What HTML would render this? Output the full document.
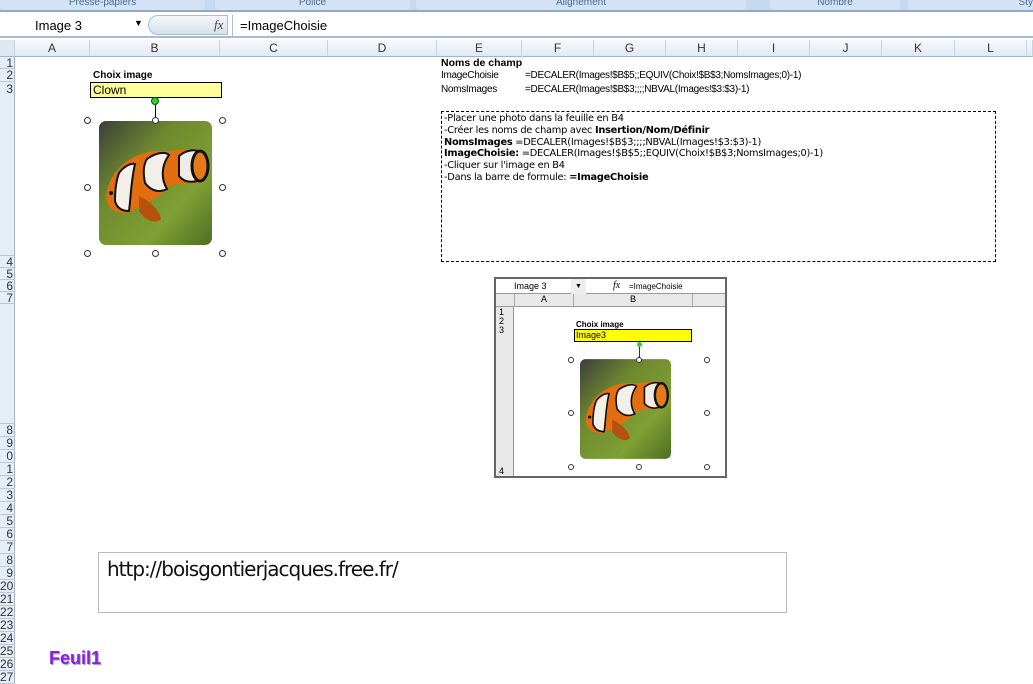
<!DOCTYPE html>
<html><head><meta charset="utf-8"><style>
*{margin:0;padding:0;box-sizing:border-box}
body{width:1033px;height:679px;overflow:hidden;background:#fff;font-family:"Liberation Sans",sans-serif;position:relative}
.a{position:absolute}
.rib{left:0;top:0;width:1033px;height:12px;background:#c5d9ef;border-bottom:2px solid #8fa9c8}
.tab{position:absolute;top:0;height:10px;background:#d4e3f4;border-radius:0 0 4px 4px;font-size:10px;color:#4a6a99;text-align:center;line-height:6px;overflow:hidden}
.colh{top:40px;height:17px;background:linear-gradient(#f7f9fc,#e2e9f3);border-bottom:1px solid #9eb6ce;font-size:12px;color:#333;text-align:center;line-height:16px;border-right:1px solid #c5d2e0}
.rowh{left:0;width:15px;background:#e6edf6;border-bottom:1px solid #b7c8dc;border-right:1px solid #9eb6ce;font-size:12px;color:#333;text-align:right;padding-right:1px;line-height:12px;overflow:hidden}
.h{width:7px;height:7px;border:1px solid #333;border-radius:50%;background:#fff}
.h2{width:6px;height:6px;border:1px solid #333;border-radius:50%;background:#fff}
.t{font-size:10px;color:#000;white-space:nowrap}
</style></head><body>
<div class="a rib"></div>
<div class="tab" style="left:0;width:205px">Presse-papiers</div>
<div class="tab" style="left:215px;width:195px">Police</div>
<div class="tab" style="left:416px;width:330px">Alignement</div>
<div class="tab" style="left:770px;width:130px">Nombre</div>
<div class="tab" style="left:908px;width:125px;text-align:right">Sty</div>
<div class="a" style="left:0;top:14px;width:1033px;height:24px;background:#fff;border-bottom:2px solid #a7bcd4"></div>
<div class="a" style="left:35px;top:18px;font-size:13px">Image 3</div>
<div class="a" style="left:134px;top:18px;font-size:9px">▼</div>
<div class="a" style="left:148px;top:15px;width:80px;height:20px;border-radius:10px 0 0 10px;background:linear-gradient(#f4f7fb,#d6e0ec);border:1px solid #aabbd0"></div>
<div class="a" style="left:214px;top:17px;font-family:'Liberation Serif',serif;font-style:italic;font-size:13px;color:#444">fx</div>
<div class="a" style="left:232px;top:15px;width:1px;height:21px;background:#aabbd0"></div>
<div class="a" style="left:240px;top:18px;font-size:13px">=ImageChoisie</div>
<div class="a colh" style="left:0;width:15px;background:#dfe7f1"></div>
<div class="a colh" style="left:15px;width:75px">A</div>
<div class="a colh" style="left:90px;width:130px">B</div>
<div class="a colh" style="left:220px;width:108px">C</div>
<div class="a colh" style="left:328px;width:109px">D</div>
<div class="a colh" style="left:437px;width:85px">E</div>
<div class="a colh" style="left:522px;width:72px">F</div>
<div class="a colh" style="left:594px;width:72px">G</div>
<div class="a colh" style="left:666px;width:72px">H</div>
<div class="a colh" style="left:738px;width:72px">I</div>
<div class="a colh" style="left:810px;width:72px">J</div>
<div class="a colh" style="left:882px;width:73px">K</div>
<div class="a colh" style="left:955px;width:72px">L</div>
<div class="a colh" style="left:1027px;width:6px"></div>
<div class="a rowh" style="top:57px;height:12px">1</div>
<div class="a rowh" style="top:69px;height:13px">2</div>
<div class="a rowh" style="top:82px;height:174px;line-height:14px">3</div>
<div class="a rowh" style="top:256px;height:12px">4</div>
<div class="a rowh" style="top:268px;height:12px">5</div>
<div class="a rowh" style="top:280px;height:12px">6</div>
<div class="a rowh" style="top:292px;height:12px">7</div>
<div class="a rowh" style="top:304px;height:120px"></div>
<div class="a rowh" style="top:424px;height:13px">8</div>
<div class="a rowh" style="top:437px;height:13px">9</div>
<div class="a rowh" style="top:450px;height:13px">0</div>
<div class="a rowh" style="top:463px;height:13px">1</div>
<div class="a rowh" style="top:476px;height:13px">2</div>
<div class="a rowh" style="top:489px;height:13px">3</div>
<div class="a rowh" style="top:502px;height:13px">4</div>
<div class="a rowh" style="top:515px;height:13px">5</div>
<div class="a rowh" style="top:528px;height:13px">6</div>
<div class="a rowh" style="top:541px;height:13px">7</div>
<div class="a rowh" style="top:554px;height:13px">8</div>
<div class="a rowh" style="top:567px;height:13px">9</div>
<div class="a rowh" style="top:580px;height:13px">20</div>
<div class="a rowh" style="top:593px;height:13px">21</div>
<div class="a rowh" style="top:606px;height:13px">22</div>
<div class="a rowh" style="top:619px;height:13px">23</div>
<div class="a rowh" style="top:632px;height:13px">24</div>
<div class="a rowh" style="top:645px;height:13px">25</div>
<div class="a rowh" style="top:658px;height:13px">26</div>
<div class="a rowh" style="top:671px;height:13px">27</div>

<svg width="0" height="0" style="position:absolute">
<defs>
<linearGradient id="bg" x1="0" y1="0" x2="1" y2="1"><stop offset="0" stop-color="#3a3f3a"/><stop offset=".35" stop-color="#6f8a2e"/><stop offset=".7" stop-color="#7ea034"/><stop offset="1" stop-color="#4f6e22"/></linearGradient>
<symbol id="fish" viewBox="0 0 113 124">
<rect width="113" height="124" rx="7" fill="url(#bg)"/>
<path d="M8 70 C15 40 45 28 65 30 C80 30 95 25 105 30 C115 45 108 62 96 62 C85 65 75 60 68 68 C55 80 35 90 25 92 C12 92 5 82 8 70Z" fill="#e36e10"/>
<path d="M20 52 C25 45 32 42 36 43 C32 60 32 75 30 90 C24 90 18 88 16 80 C16 70 17 60 20 52Z" fill="#f4f0e8" stroke="#111" stroke-width="2"/>
<path d="M48 38 C56 32 66 30 70 34 C62 45 62 58 68 68 C60 72 52 70 46 62 C44 52 44 44 48 38Z" fill="#f2eee8" stroke="#111" stroke-width="2"/>
<path d="M80 35 C88 28 98 28 102 32 C96 40 95 52 98 60 C90 62 84 60 80 55Z" fill="#f0ece4" stroke="#111" stroke-width="2"/>
<ellipse cx="101" cy="45" rx="8" ry="15" fill="#e57a18" stroke="#111" stroke-width="3"/>
<path d="M40 75 C50 80 60 88 62 98 C55 104 45 98 40 90Z" fill="#b8500e"/>
<circle cx="12" cy="72" r="2" fill="#111"/>
</symbol>
</defs></svg>

<div class="a t" style="left:93px;top:70px;font-weight:bold">Choix image</div>
<div class="a" style="left:90px;top:82px;width:132px;height:16px;background:#ffff99;border:1px solid #000;font-size:12px;padding-left:2px;line-height:14px">Clown</div>
<div class="a" style="left:155px;top:103px;width:1px;height:16px;background:#000"></div>
<div class="a" style="left:151px;top:97px;width:8px;height:8px;border-radius:50%;background:#3c3;border:1px solid #060"></div>
<svg class="a" style="left:99px;top:121px" width="113" height="124"><use href="#fish"/></svg>
<div class="a h" style="left:84px;top:117px"></div><div class="a h" style="left:152px;top:117px"></div><div class="a h" style="left:219px;top:117px"></div>
<div class="a h" style="left:84px;top:184px"></div><div class="a h" style="left:219px;top:184px"></div>
<div class="a h" style="left:84px;top:250px"></div><div class="a h" style="left:152px;top:250px"></div><div class="a h" style="left:219px;top:250px"></div>

<div class="a t" style="left:441px;top:57px;font-weight:bold;font-size:10.5px">Noms de champ</div>
<div class="a t" style="left:441px;top:70px;letter-spacing:-.3px">ImageChoisie</div>
<div class="a t" style="left:525px;top:70px;letter-spacing:-.3px">=DECALER(Images!$B$5;;EQUIV(Choix!$B$3;NomsImages;0)-1)</div>
<div class="a t" style="left:441px;top:84px;letter-spacing:-.3px">NomsImages</div>
<div class="a t" style="left:525px;top:84px;letter-spacing:-.3px">=DECALER(Images!$B$3;;;;NBVAL(Images!$3:$3)-1)</div>
<div class="a" style="left:441px;top:111px;width:555px;height:151px;border:1px dashed #000"></div>
<div class="a t" style="left:444px;top:113px;line-height:11.8px;font-family:'DejaVu Sans',sans-serif;font-size:9.8px;letter-spacing:-.25px">
-Placer une photo dans la feuille en B4<br>
-Créer les noms de champ avec <b>Insertion/Nom/Définir</b><br>
<b>NomsImages</b> =DECALER(Images!$B$3;;;;NBVAL(Images!$3:$3)-1)<br>
<b>ImageChoisie:</b> =DECALER(Images!$B$5;;EQUIV(Choix!$B$3;NomsImages;0)-1)<br>
-Cliquer sur l'image en B4<br>
-Dans la barre de formule: <b>=ImageChoisie</b></div>

<div class="a" style="left:494px;top:277px;width:233px;height:201px;border:2px solid #666;background:#fff;overflow:hidden">
 <div class="a" style="left:0;top:0;width:229px;height:15px;background:#fff;border-bottom:1px solid #999"></div>
 <div class="a t" style="left:18px;top:2px;font-size:9px">Image 3</div>
 <div class="a" style="left:75px;top:0;width:15px;height:15px;background:#eee;font-size:7px;text-align:center;line-height:15px">▼</div>
 <div class="a t" style="left:117px;top:1px;font-style:italic;font-family:'Liberation Serif',serif;font-size:10px">fx</div>
 <div class="a t" style="left:133px;top:3px;font-size:8px">=ImageChoisie</div>
 <div class="a" style="left:0;top:15px;width:229px;height:13px;background:#e8e8e8;border-bottom:1px solid #999"></div>
 <div class="a t" style="left:18px;top:15px;width:60px;text-align:center;border-left:1px solid #aaa;border-right:1px solid #aaa;height:13px;font-size:9px">A</div>
 <div class="a t" style="left:78px;top:15px;width:119px;text-align:center;border-right:1px solid #aaa;height:13px;font-size:9px">B</div>
 <div class="a" style="left:0;top:28px;width:18px;height:171px;background:#e8e8e8;border-right:1px solid #999"></div>
 <div class="a t" style="left:3px;top:29px;font-size:9px;line-height:9px">1<br>2<br>3</div>
 <div class="a t" style="left:3px;top:187px;font-size:9px">4</div>
 <div class="a t" style="left:80px;top:41px;font-weight:bold;font-size:8px">Choix image</div>
 <div class="a" style="left:78px;top:50px;width:118px;height:13px;background:#ffff00;border:1px solid #000;font-size:9px;line-height:11px;padding-left:1px">Image3</div>
 <div class="a" style="left:143px;top:66px;width:1px;height:14px;background:#333"></div>
 <div class="a" style="left:141px;top:63px;width:5px;height:5px;border-radius:50%;background:#3c3"></div>
 <svg class="a" style="left:84px;top:80px" width="91" height="100"><use href="#fish"/></svg>
 <div class="a h2" style="left:72px;top:78px"></div><div class="a h2" style="left:140px;top:78px"></div><div class="a h2" style="left:208px;top:78px"></div>
 <div class="a h2" style="left:72px;top:131px"></div><div class="a h2" style="left:208px;top:131px"></div>
 <div class="a h2" style="left:72px;top:185px"></div><div class="a h2" style="left:140px;top:185px"></div><div class="a h2" style="left:208px;top:185px"></div>
</div>

<div class="a" style="left:98px;top:552px;width:689px;height:61px;border:1px solid #bbb;background:#fff"></div>
<div class="a" style="left:107px;top:557px;font-size:20px;font-family:'DejaVu Sans',sans-serif;letter-spacing:-1px;color:#111">http://boisgontierjacques.free.fr/</div>

<div class="a" style="left:49px;top:648px;font-size:18px;font-weight:bold;color:#8a1ee6;text-shadow:1px 1px 1px #999">Feuil1</div>
</body></html>
